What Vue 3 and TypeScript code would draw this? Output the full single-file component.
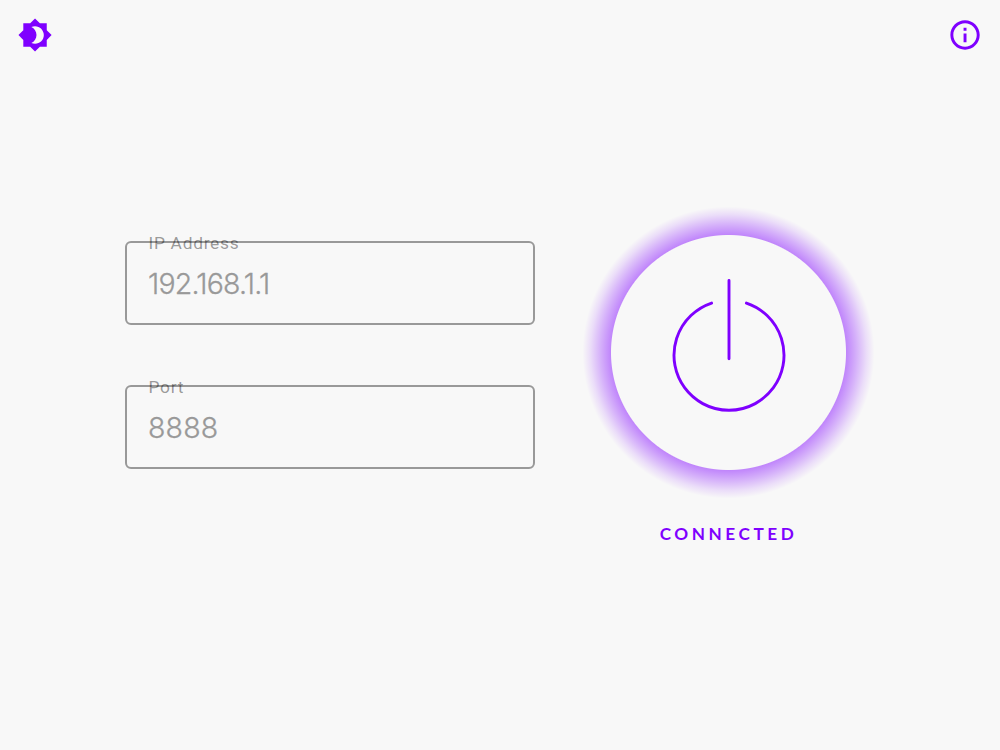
<script setup lang="ts">
import { ref } from 'vue'

interface Field {
  id: string
  label: string
  value: string
}

const fields = ref<Field[]>([
  { id: 'address', label: 'IP Address', value: '192.168.1.1' },
  { id: 'port', label: 'Port', value: '8888' },
])
const connected = ref(true)
</script>

<template>
  <div class="app">
    <header class="toolbar">
      <button class="icon-button" aria-label="Toggle theme">
        <svg viewBox="-0.3 -0.3 24 24">
          <path d="M20 8.69V4h-4.69L12 .69 8.69 4H4v4.69L.69 12 4 15.31V20h4.69L12 23.31 15.31 20H20v-4.69L23.31 12 20 8.69zM12 18c-.89 0-1.74-.2-2.5-.55C11.56 16.5 13 14.42 13 12s-1.44-4.5-3.5-5.45C10.26 6.2 11.11 6 12 6c3.31 0 6 2.69 6 6s-2.69 6-6 6z" />
        </svg>
      </button>
      <button class="icon-button" aria-label="About">
        <svg viewBox="-0.3 -0.3 24 24">
          <path d="M11 7h2v2h-2zm0 4h2v6h-2zm1-9C6.48 2 2 6.48 2 12s4.48 10 10 10 10-4.48 10-10S17.52 2 12 2zm0 18c-4.41 0-8-3.59-8-8s3.59-8 8-8 8 3.59 8 8-3.59 8-8 8z" />
        </svg>
      </button>
    </header>

    <main class="content">
      <form class="fields">
        <div v-for="field in fields" :key="field.id" class="field">
          <span class="label">{{ field.label }}</span>
          <span class="value" :class="field.id">{{ field.value }}</span>
        </div>
      </form>

      <section class="connection">
        <button class="power" aria-label="Toggle connection" @click="connected = !connected">
          <svg viewBox="0 0 235 235">
            <path d="M100.6 68.1A55 55 0 1 0 135.4 68.1M118 45.4V123.8" />
          </svg>
        </button>
        <span class="status">{{ connected ? 'CONNECTED' : 'DISCONNECTED' }}</span>
      </section>
    </main>
  </div>
</template>

<style>
body {
  background: #f8f8f8;
}
</style>

<style scoped>
.app {
  box-sizing: border-box;
  width: 1000px;
  height: 750px;
  overflow: hidden;
  background: #f8f8f8;
}

button {
  display: block;
  padding: 0;
  border: 0;
  background: none;
}

.toolbar {
  display: flex;
  justify-content: space-between;
  height: 52px;
  padding: 17px 17.4px 0;
}

.icon-button {
  width: 35.2px;
  height: 35.2px;
}

.icon-button svg {
  display: block;
  width: 100%;
  height: 100%;
  fill: #7f00ff;
}

.content {
  display: flex;
  padding: 166px 0 0 125px;
}

.fields {
  display: flex;
  flex-direction: column;
  gap: 60px;
  padding-top: 6px;
}

.field {
  position: relative;
  box-sizing: border-box;
  display: flex;
  align-items: center;
  width: 410px;
  height: 84px;
  padding-left: 21px;
  border: 2px solid #999;
  border-radius: 6px;
}

.label {
  position: absolute;
  top: -11px;
  left: 21.5px;
  color: rgba(0, 0, 0, 0.4);
  font: 400 17.4px/22px Roboto, sans-serif;
  letter-spacing: 0.7px;
}

.value {
  padding-top: 1px;
  color: #999;
  font: 300 28.5px/36px Inter, sans-serif;
  -webkit-text-stroke: 0.3px #999;
}

.value.address {
  letter-spacing: -0.8px;
}

.value.port {
  letter-spacing: 0.15px;
}

.connection {
  display: flex;
  flex-direction: column;
  align-items: center;
  width: 235px;
  margin-left: 76px;
}

.power {
  position: relative;
  z-index: 0;
  width: 235px;
  height: 235px;
}

.power::before {
  position: absolute;
  z-index: -1;
  inset: -30px;
  border-radius: 50%;
  background: radial-gradient(
    circle closest-side,
    #f8f8f8 117px,
    rgba(127, 0, 255, 0.46) 118px,
    rgba(127, 0, 255, 0.27) 129px,
    rgba(127, 0, 255, 0.11) 138px,
    rgba(127, 0, 255, 0) 146px
  );
  content: '';
}

.power svg {
  display: block;
  width: 100%;
  height: 100%;
  fill: none;
  stroke: #7f00ff;
  stroke-width: 2.9;
  stroke-linecap: round;
}

.status {
  margin-top: 53px;
  color: #7f00ff;
  font: 700 17.2px/22px Lato, sans-serif;
  letter-spacing: 3.55px;
}
</style>
